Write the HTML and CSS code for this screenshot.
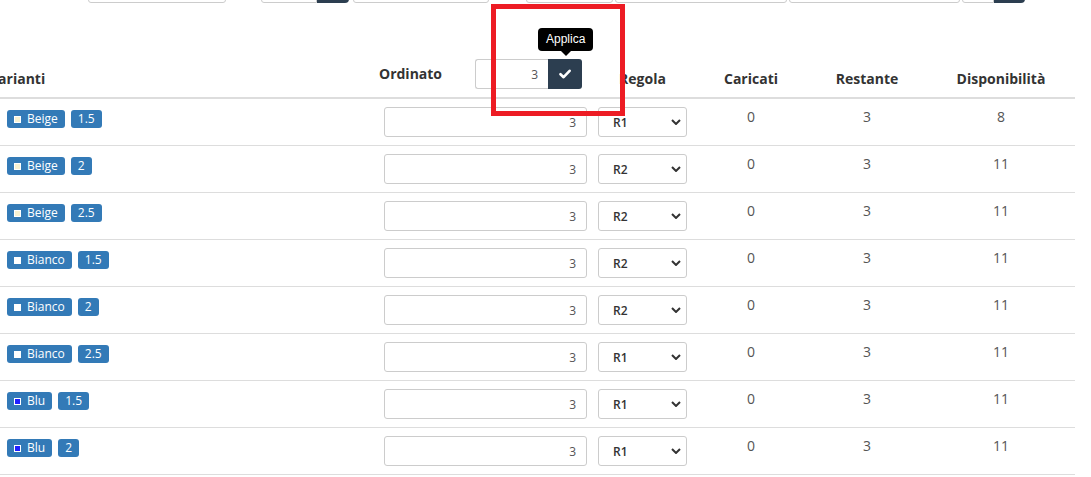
FILE: index.html
```html
<!DOCTYPE html>
<html lang="it">
<head>
<meta charset="utf-8">
<title>Varianti</title>
<link rel="stylesheet" href="styles.css">
</head>
<body>
<div class="topbar">
  <div class="tb-field tb-a"></div>
  <div class="tb-field tb-b tb-left"></div><div class="tb-btn tb-btn-a"></div>
  <div class="tb-field tb-c"></div>
  <div class="tb-field tb-d"></div>
  <div class="tb-field tb-e"></div>
  <div class="tb-field tb-f"></div>
  <div class="tb-field tb-g tb-left"></div><div class="tb-btn tb-btn-b"></div>
</div>

<div class="table-wrap">
<table class="grid">
  <colgroup>
    <col class="c-var"><col class="c-ord"><col class="c-reg"><col class="c-car"><col class="c-res"><col class="c-disp">
  </colgroup>
  <thead>
    <tr>
      <th class="th-left">Varianti</th>
      <th>
        <div class="ord-head">
          <span>Ordinato</span>
          <div class="hgroup">
            <input class="hinput" type="text" value="3">
            <button class="hbtn" type="button" aria-label="Applica">
              <svg width="12" height="10" viewBox="0 0 12 10"><path d="M1.5 5.2 L4.6 8.2 L10.6 1.8" fill="none" stroke="#fff" stroke-width="2.6" stroke-linecap="round" stroke-linejoin="round"/></svg>
            </button>
            <div class="tooltip">Applica</div>
          </div>
        </div>
      </th>
      <th>Regola</th>
      <th>Caricati</th>
      <th>Restante</th>
      <th>Disponibilità</th>
    </tr>
  </thead>
  <tbody>
    <tr>
      <td class="td-var"><div class="badges"><span class="badge"><i class="sw sw-beige"></i>Beige</span><span class="badge">1.5</span></div></td>
      <td class="td-ord"><input class="qty" type="text" value="3"></td>
      <td><div class="sel-wrap"><select class="sel"><option>R1</option></select><svg class="chev" width="10" height="6" viewBox="0 0 10 6"><path d="M1 1 L5 5 L9 1" fill="none" stroke="#333" stroke-width="2"/></svg></div></td>
      <td>0</td><td>3</td><td>8</td>
    </tr>
    <tr>
      <td class="td-var"><div class="badges"><span class="badge"><i class="sw sw-beige"></i>Beige</span><span class="badge">2</span></div></td>
      <td class="td-ord"><input class="qty" type="text" value="3"></td>
      <td><div class="sel-wrap"><select class="sel"><option>R2</option></select><svg class="chev" width="10" height="6" viewBox="0 0 10 6"><path d="M1 1 L5 5 L9 1" fill="none" stroke="#333" stroke-width="2"/></svg></div></td>
      <td>0</td><td>3</td><td>11</td>
    </tr>
    <tr>
      <td class="td-var"><div class="badges"><span class="badge"><i class="sw sw-beige"></i>Beige</span><span class="badge">2.5</span></div></td>
      <td class="td-ord"><input class="qty" type="text" value="3"></td>
      <td><div class="sel-wrap"><select class="sel"><option>R2</option></select><svg class="chev" width="10" height="6" viewBox="0 0 10 6"><path d="M1 1 L5 5 L9 1" fill="none" stroke="#333" stroke-width="2"/></svg></div></td>
      <td>0</td><td>3</td><td>11</td>
    </tr>
    <tr>
      <td class="td-var"><div class="badges"><span class="badge"><i class="sw sw-white"></i>Bianco</span><span class="badge">1.5</span></div></td>
      <td class="td-ord"><input class="qty" type="text" value="3"></td>
      <td><div class="sel-wrap"><select class="sel"><option>R2</option></select><svg class="chev" width="10" height="6" viewBox="0 0 10 6"><path d="M1 1 L5 5 L9 1" fill="none" stroke="#333" stroke-width="2"/></svg></div></td>
      <td>0</td><td>3</td><td>11</td>
    </tr>
    <tr>
      <td class="td-var"><div class="badges"><span class="badge"><i class="sw sw-white"></i>Bianco</span><span class="badge">2</span></div></td>
      <td class="td-ord"><input class="qty" type="text" value="3"></td>
      <td><div class="sel-wrap"><select class="sel"><option>R2</option></select><svg class="chev" width="10" height="6" viewBox="0 0 10 6"><path d="M1 1 L5 5 L9 1" fill="none" stroke="#333" stroke-width="2"/></svg></div></td>
      <td>0</td><td>3</td><td>11</td>
    </tr>
    <tr>
      <td class="td-var"><div class="badges"><span class="badge"><i class="sw sw-white"></i>Bianco</span><span class="badge">2.5</span></div></td>
      <td class="td-ord"><input class="qty" type="text" value="3"></td>
      <td><div class="sel-wrap"><select class="sel"><option>R1</option></select><svg class="chev" width="10" height="6" viewBox="0 0 10 6"><path d="M1 1 L5 5 L9 1" fill="none" stroke="#333" stroke-width="2"/></svg></div></td>
      <td>0</td><td>3</td><td>11</td>
    </tr>
    <tr>
      <td class="td-var"><div class="badges"><span class="badge"><i class="sw sw-blue"></i>Blu</span><span class="badge">1.5</span></div></td>
      <td class="td-ord"><input class="qty" type="text" value="3"></td>
      <td><div class="sel-wrap"><select class="sel"><option>R1</option></select><svg class="chev" width="10" height="6" viewBox="0 0 10 6"><path d="M1 1 L5 5 L9 1" fill="none" stroke="#333" stroke-width="2"/></svg></div></td>
      <td>0</td><td>3</td><td>11</td>
    </tr>
    <tr class="last">
      <td class="td-var"><div class="badges"><span class="badge"><i class="sw sw-blue"></i>Blu</span><span class="badge">2</span></div></td>
      <td class="td-ord"><input class="qty" type="text" value="3"></td>
      <td><div class="sel-wrap"><select class="sel"><option>R1</option></select><svg class="chev" width="10" height="6" viewBox="0 0 10 6"><path d="M1 1 L5 5 L9 1" fill="none" stroke="#333" stroke-width="2"/></svg></div></td>
      <td>0</td><td>3</td><td>11</td>
    </tr>
  </tbody>
</table>
</div>

<div class="highlight"></div>
</body>
</html>
```
FILE: styles.css
```css
html, body {
  margin: 0;
  padding: 0;
  background: #fff;
  overflow: hidden;
}
body {
  font-family: "Open Sans", "Liberation Sans", sans-serif;
  font-size: 14px;
  line-height: 20px;
  color: #333;
  width: 1091px;
  height: 477px;
  position: relative;
}

/* top toolbar (mostly scrolled out of view) */
.topbar {
  display: flex;
  align-items: flex-end;
  height: 3px;
  overflow: hidden;
}
.tb-field {
  height: 30px;
  flex: none;
  box-sizing: border-box;
  border: 1px solid #ccc;
  border-radius: 3px;
  background: #fff;
}
.tb-left { border-radius: 3px 0 0 3px; }
.tb-btn {
  height: 30px;
  flex: none;
  background: #2c3e50;
  border-radius: 0 4px 4px 0;
}
.tb-a { width: 138px; margin-left: 88px; }
.tb-b { width: 56px; margin-left: 35px; }
.tb-btn-a { width: 32px; }
.tb-c { width: 136px; margin-left: 4px; }
.tb-d { width: 87px; margin-left: 37px; }
.tb-e { width: 172px; margin-left: 2px; }
.tb-f { width: 171px; margin-left: 2px; }
.tb-g { width: 32px; margin-left: 2px; }
.tb-btn-b { width: 31px; }

/* table */
.table-wrap {
  margin-top: 48px;
}
.grid {
  border-collapse: collapse;
  table-layout: fixed;
  width: 1089px;
  margin-left: -14px;
}
.c-var { width: 385px; }
.c-ord { width: 219px; }
.c-reg { width: 105px; }
.c-car { width: 112px; }
.c-res { width: 120px; }
.c-disp { width: 148px; }

.grid th {
  padding: 8px;
  border-bottom: 2px solid #ddd;
  vertical-align: bottom;
  text-align: center;
  font-weight: 700;
  color: #333;
  white-space: nowrap;
}
.grid th.th-left {
  text-align: left;
  padding-left: 3px;
}

.grid td {
  padding: 8px;
  height: 30px;
  border-top: 1px solid #ddd;
  vertical-align: top;
  text-align: center;
  color: #555;
}
.grid tr.last td {
  border-bottom: 1px solid #ddd;
}
.grid td.td-var {
  text-align: left;
  padding-left: 21px;
}
.grid td.td-ord {
  padding-left: 13px;
  padding-right: 3px;
}

.ord-head {
  display: flex;
  align-items: center;
  justify-content: space-between;
  text-align: left;
}
.hgroup {
  display: flex;
  position: relative;
}
.hinput {
  width: 73px;
  height: 30px;
  box-sizing: border-box;
  border: 1px solid #ccc;
  border-right: 0;
  border-radius: 3px 0 0 3px;
  padding: 5px 10px;
  font-family: "Open Sans", sans-serif;
  font-size: 12px;
  color: #555;
  text-align: right;
  outline: none;
}
.hbtn {
  width: 34px;
  height: 30px;
  border: 0;
  border-radius: 0 3px 3px 0;
  background: #2c3e50;
  display: flex;
  align-items: center;
  justify-content: center;
  padding: 0;
}
.tooltip {
  position: absolute;
  bottom: calc(100% + 8px);
  left: 63px;
  background: #000;
  color: #fff;
  font-family: "Liberation Sans", Arial, sans-serif;
  font-weight: 400;
  font-size: 12px;
  line-height: 17px;
  padding: 3px 8px;
  border-radius: 4px;
  white-space: nowrap;
}
.tooltip::after {
  content: "";
  position: absolute;
  top: 100%;
  left: 50%;
  margin-left: -5px;
  border-width: 5px 5px 0;
  border-style: solid;
  border-color: #000 transparent transparent;
}

/* badges */
.badges {
  display: flex;
  gap: 6px;
  margin-top: 3px;
}
.badge {
  display: inline-flex;
  align-items: center;
  height: 18px;
  box-sizing: border-box;
  padding: 0 7px 1px 7px;
  background: #337ab7;
  color: #fff;
  font-size: 12px;
  line-height: 16px;
  border-radius: 3px;
}
.sw {
  display: inline-block;
  width: 7px;
  height: 7px;
  box-sizing: border-box;
  border: 1px solid #fff;
  margin-right: 6px;
  margin-top: 1px;
}
.sw-beige { background: #f7f1d2; }
.sw-white { background: #fff; }
.sw-blue { background: #1f1fff; }

/* inputs */
.qty {
  display: block;
  width: 100%;
  height: 30px;
  box-sizing: border-box;
  border: 1px solid #ccc;
  border-radius: 3px;
  padding: 5px 10px;
  font-family: "Open Sans", sans-serif;
  font-size: 12px;
  color: #555;
  text-align: right;
  outline: none;
}
.sel-wrap {
  position: relative;
  width: 89px;
  margin: 0 auto;
}
.sel {
  display: block;
  width: 89px;
  height: 30px;
  box-sizing: border-box;
  border: 1px solid #ccc;
  border-radius: 3px;
  background: #fff;
  padding: 0 0 0 14px;
  font-family: "Open Sans", sans-serif;
  font-size: 12px;
  font-weight: 600;
  color: #333;
  -webkit-appearance: none;
  appearance: none;
  outline: none;
}
.chev {
  position: absolute;
  right: 6px;
  top: 12px;
  pointer-events: none;
}

/* red highlight box overlay */
.highlight {
  position: absolute;
  left: 491px;
  top: 4px;
  width: 134px;
  height: 112px;
  box-sizing: border-box;
  border: 5px solid #ed1c24;
  pointer-events: none;
}
```
